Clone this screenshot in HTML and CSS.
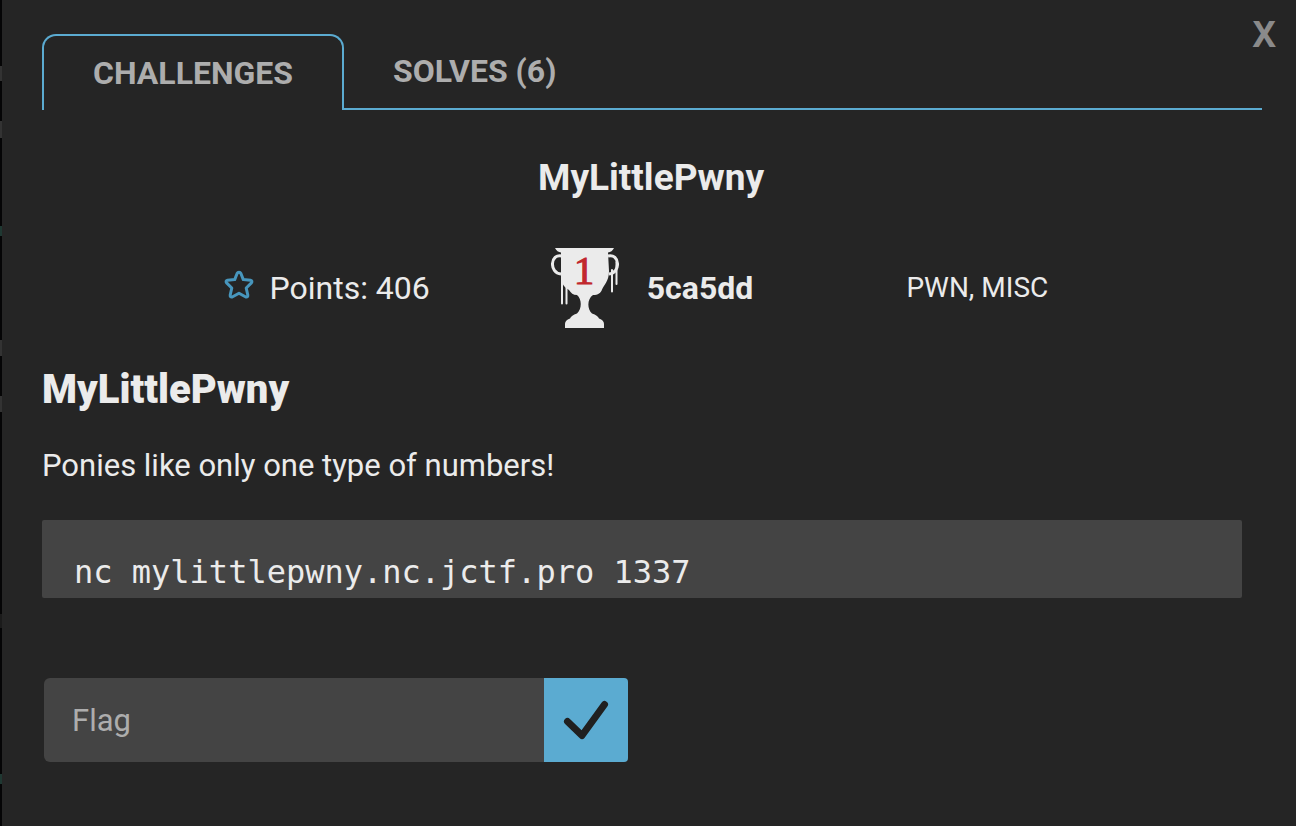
FILE: index.html
```html
<!DOCTYPE html>
<html lang="en">
<head>
<meta charset="utf-8">
<meta name="viewport" content="width=device-width, initial-scale=1">
<title>MyLittlePwny</title>
<link rel="stylesheet" href="styles.css">
</head>
<body>
<main class="modal">
  <button class="close" type="button" aria-label="Close">X</button>
  <nav class="tabs">
    <button class="tab tab-active" type="button">CHALLENGES</button>
    <button class="tab" type="button">SOLVES (6)</button>
  </nav>
  <h1 class="title">MyLittlePwny</h1>
  <section class="facts">
    <div class="fact">
      <svg class="star" viewBox="0 0 30 30" aria-hidden="true"><path d="M15 2.2Q16.3 2.2 16.9 3.5L19.3 9.6L26.5 10.3Q28.8 10.8 27.4 12.9L22.2 18L23.8 25Q24 27.6 21.8 27L15 23.2L8.2 27Q6 27.6 6.2 25L7.8 18L2.6 12.9Q1.2 10.8 3.5 10.3L10.7 9.6L13.1 3.5Q13.7 2.2 15 2.2Z"/></svg>
      <span>Points: 406</span>
    </div>
    <div class="fact fact-winner">
      <svg class="trophy" viewBox="0 0 68 80" aria-hidden="true">
        <path class="cup" d="M4 0H63Q61 4 57 4.500L58 23C58 33 53 37 51 41.500C50 45 47 47 42 47C36 51 36 61 41 65.500C45 67 47 68 48 70.500Q53 72 53 76V80H14V76Q14 72 19 70.500C20 68 22 67 26 65.500C31 61 31 51 26 47C22 47 20 45 18 42C14 40 10 35 10 30V4.500Q6 4 4 0Z"/>
        <path class="handle" d="M11 8C-1 5-2 25 10 26M57 8C69 5 70 25 58 26"/>
        <path class="drip" d="M11 24V55.500M15.500 34V55.500M61 22V43.500M65.500 14V36"/>
        <text class="rank" x="33" y="36" text-anchor="middle">1</text>
      </svg>
      <strong>5ca5dd</strong>
    </div>
    <div class="fact fact-tags">PWN, MISC</div>
  </section>
  <article class="description">
    <h2 class="heading">MyLittlePwny</h2>
    <p class="text">Ponies like only one type of numbers!</p>
    <pre class="command"><code>nc mylittlepwny.nc.jctf.pro 1337</code></pre>
  </article>
  <form class="flag-form">
    <input class="flag" type="text" placeholder="Flag" aria-label="Flag">
    <button class="submit" type="button" aria-label="Submit flag">
      <svg class="check" viewBox="0 0 84 84" aria-hidden="true"><path d="M23.500 43.500L38 57.500L60.500 26.500"/></svg>
    </button>
  </form>
</main>
</body>
</html>
```
FILE: styles.css
```css
* { box-sizing: border-box; }
body {
  margin: 0;
  min-height: 100vh;
  padding-left: 2px;
  background:
    linear-gradient(#333, #333) 0 66px / 2px 15px no-repeat,
    linear-gradient(#333, #333) 0 121px / 2px 17px no-repeat,
    linear-gradient(#1f3832, #1f3832) 0 226px / 2px 10px no-repeat,
    linear-gradient(#333, #333) 0 340px / 2px 16px no-repeat,
    linear-gradient(#333, #333) 0 396px / 2px 16px no-repeat,
    linear-gradient(#1b1b1b, #1b1b1b) 0 614px / 2px 14px no-repeat,
    linear-gradient(#1f3832, #1f3832) 0 774px / 2px 10px no-repeat,
    #050506;
  color: #ebebeb;
  font: 31px/40px Roboto, "Liberation Sans", sans-serif;
}
button, input { font: inherit; border: 0; margin: 0; }
.modal {
  position: relative;
  min-height: 100vh;
  padding: 34px 34px 64px 40px;
  background: #252525;
}
.close {
  position: absolute;
  top: 14px;
  right: 20px;
  padding: 0;
  background: none;
  color: #8a8a8a;
  font: 700 35px/40px "Noto Sans", sans-serif;
}
.tabs { display: flex; height: 76px; }
.tabs::after {
  content: "";
  flex: 1;
  border-bottom: 2px solid #5babd1;
}
.tab {
  padding: 0 49px;
  background: none;
  border-bottom: 2px solid #5babd1;
  color: #adadad;
  font-size: 32px;
  font-weight: 700;
}
.tab-active {
  min-width: 301px;
  border: 2px solid #5babd1;
  border-bottom: 0;
  border-radius: 14px 14px 0 0;
}
.title {
  margin: 48px 0 0;
  padding-right: 2px;
  text-align: center;
  font-size: 37px;
  line-height: 40px;
  font-weight: 700;
}
.facts {
  display: grid;
  grid-template-columns: 1fr 1fr 1fr;
  gap: 20px;
  padding: 0 132px;
  margin-top: 50px;
  font-size: 32px;
}
.fact { display: flex; align-items: center; justify-content: center; gap: 16px; }
.fact-winner { gap: 28px; }
.star { width: 30px; height: 30px; margin-bottom: 6px; fill: none; stroke: #4796bd; stroke-width: 3; stroke-linejoin: round; }
.trophy { width: 68px; height: 80px; flex: none; }
.cup { fill: #ebebeb; }
.handle { fill: none; stroke: #ebebeb; stroke-width: 3; }
.drip { fill: none; stroke: #ebebeb; stroke-width: 2; stroke-linecap: round; }
.rank { fill: #c1282d; stroke: #c1282d; stroke-width: 1; font: 41px "Liberation Serif", serif; }
.fact-tags { font-size: 28px; }
.heading { margin: 40px 0 0; font-size: 40px; line-height: 44px; font-weight: 900; }
.text { margin: 34px 0 0; }
.command {
  margin: 34px 20px 0 0;
  padding: 32px 32px 6px;
  overflow: hidden;
  border-radius: 2px;
  background: #444;
}
.command code { font: 32px/40px "DejaVu Sans Mono", monospace; display: block; }
.flag-form { display: flex; width: 584px; max-width: 100%; margin: 80px 0 0 2px; }
.flag {
  flex: 1;
  min-width: 0;
  height: 84px;
  padding: 0 28px;
  border-radius: 6px 0 0 6px;
  background: #444;
  color: #ebebeb;
}
.flag::placeholder { color: #adadad; opacity: 1; }
.submit {
  display: flex;
  width: 84px;
  height: 84px;
  padding: 0;
  border-radius: 0 4px 4px 0;
  background: #5babd1;
}
.check { width: 84px; height: 84px; fill: none; stroke: #202020; stroke-width: 7; stroke-linecap: round; stroke-linejoin: round; }
```
